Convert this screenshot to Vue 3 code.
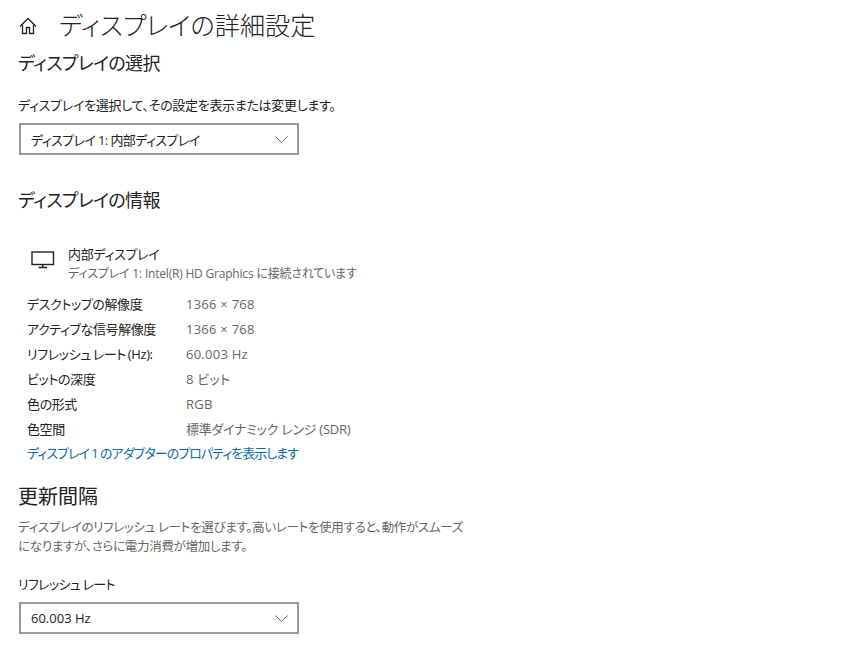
<script setup>
const infoRows = [
  { label: 'デスクトップの解像度', value: '1366 × 768' },
  { label: 'アクティブな信号解像度', value: '1366 × 768' },
  { label: 'リフレッシュ レート (Hz):', value: '60.003 Hz' },
  { label: 'ビットの深度', value: '8 ビット' },
  { label: '色の形式', value: 'RGB' },
  { label: '色空間', value: '標準ダイナミック レンジ (SDR)', narrow: true }
]
</script>

<template>
  <div class="page">
    <div class="header">
      <svg class="home" width="18" height="18" viewBox="0 0 18 18" fill="none" stroke="#222" stroke-width="1.3">
        <path d="M1 9.5 9 1.5l8 8" />
        <path d="M3.5 7.5V16.5H7.5V10.5H10.5V16.5H14.5V7.5" />
      </svg>
      <h1>ディスプレイの詳細設定</h1>
    </div>

    <h2 class="first">ディスプレイの選択</h2>
    <p class="label select-label">ディスプレイを選択して、その設定を表示または変更します。</p>
    <div class="select">
      <span class="select-text">ディスプレイ 1: 内部ディスプレイ</span>
      <svg width="13" height="7" viewBox="0 0 13 7" fill="none" stroke="#666" stroke-width="1"><path d="M.5.5l6 6 6-6" /></svg>
    </div>

    <h2 class="info-title">ディスプレイの情報</h2>
    <div class="monitor">
      <svg width="24" height="18" viewBox="0 0 24 18" fill="none" stroke="#222" stroke-width="1.4">
        <rect x="1" y="1" width="21.5" height="12.5" />
        <path d="M11.7 13.5v3M7.5 16.5h8.5" />
      </svg>
      <div>
        <div class="monitor-name">内部ディスプレイ</div>
        <div class="monitor-sub">ディスプレイ 1: Intel(R) HD Graphics に接続されています</div>
      </div>
    </div>

    <div class="rows">
      <div v-for="row in infoRows" :key="row.label" class="row">
        <span class="row-label">{{ row.label }}</span>
        <span class="row-value" :class="{ narrow: row.narrow }">{{ row.value }}</span>
      </div>
    </div>
    <a class="link">ディスプレイ 1 のアダプターのプロパティを表示します</a>

    <h2 class="rate-title">更新間隔</h2>
    <p class="desc">ディスプレイのリフレッシュ レートを選びます。高いレートを使用すると、動作がスムーズになりますが、さらに電力消費が増加します。</p>
    <p class="label rate-label">リフレッシュ レート</p>
    <div class="select">
      <span>60.003 Hz</span>
      <svg width="13" height="7" viewBox="0 0 13 7" fill="none" stroke="#666" stroke-width="1"><path d="M.5.5l6 6 6-6" /></svg>
    </div>
  </div>
</template>

<style>
html, body {
  background: #fff;
}
</style>

<style scoped>
.page {
  width: 853px;
  height: 648px;
  overflow: hidden;
  padding: 8px 0 0 18px;
  box-sizing: border-box;
  background: #fff;
  color: #222;
  font-family: "Open Sans", "Noto Sans CJK JP", sans-serif;
  font-feature-settings: "palt";
  font-size: 13px;
}

.header {
  display: flex;
  align-items: center;
  height: 34px;
}

.home {
  margin: 2px 22px 0 1px;
}

h1 {
  margin: 0;
  font-size: 25.2px;
  font-weight: 300;
  line-height: 34px;
  white-space: nowrap;
}

h2 {
  margin: 0;
  font-size: 18px;
  font-weight: 400;
  line-height: 26px;
  letter-spacing: -0.6px;
}

.first {
  margin-top: 8px;
}

.label {
  margin: 0;
  line-height: 20px;
  letter-spacing: -0.3px;
}

.select-label {
  margin-top: 19px;
}

.select {
  display: flex;
  align-items: center;
  justify-content: space-between;
  width: 280px;
  height: 32px;
  margin: 8px 0 0 1px;
  padding: 0 9px 0 10px;
  box-sizing: border-box;
  border: 2px solid #999;
}

.select-text {
  letter-spacing: -0.6px;
}

.info-title {
  margin-top: 32px;
}

.monitor {
  display: flex;
  margin: 31px 0 0 13px;
  gap: 13px;
  align-items: flex-start;
}

.monitor svg {
  margin-top: 7px;
}

.monitor-name {
  line-height: 21px;
  letter-spacing: -0.3px;
}

.monitor-sub {
  line-height: 18px;
  font-size: 12px;
  letter-spacing: -0.2px;
  color: #666;
}

.rows {
  margin: 9px 0 0 9px;
}

.row {
  display: flex;
  height: 25px;
  line-height: 25px;
}

.row-label {
  width: 159px;
  white-space: nowrap;
  letter-spacing: -0.4px;
  word-spacing: -1px;
}

.row-value {
  color: #666;
  letter-spacing: 0.25px;
}

.row-value.narrow {
  letter-spacing: -0.25px;
}

.link {
  display: block;
  margin: -1px 0 0 9px;
  line-height: 25px;
  letter-spacing: -1px;
  color: #0b6aa8;
}

.rate-title {
  margin-top: 18px;
  font-size: 20px;
  letter-spacing: 0;
}

.desc {
  width: 452px;
  margin: 8px 0 0;
  line-height: 19px;
  font-size: 12.5px;
  letter-spacing: -0.3px;
  color: #666;
}

.rate-label {
  margin-top: 18px;
  letter-spacing: -0.7px;
}
</style>
